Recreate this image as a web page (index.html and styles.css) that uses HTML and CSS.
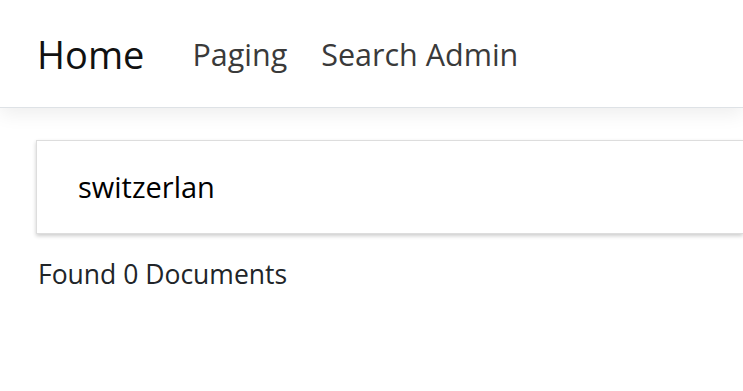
FILE: index.html
```html
<!DOCTYPE html>
<html lang="en">
<head>
    <meta charset="UTF-8">
    <meta name="viewport" content="width=device-width, initial-scale=1.0">
    <title>Home</title>
    <link rel="stylesheet" href="styles.css">
</head>
<body>
    <nav class="navbar">
        <a class="navbar-brand" href="#">Home</a>
        <a class="nav-link" href="#">Paging</a>
        <a class="nav-link" href="#">Search Admin</a>
    </nav>

    <div class="content">
        <div class="search-box">
            <input type="text" class="search-input" value="switzerlan">
        </div>
        <p class="result-count">Found 0 Documents</p>
    </div>
</body>
</html>
```

FILE: styles.css
```css
html, body {
    margin: 0;
    overflow: hidden;
}
body {
    font-family: 'Open Sans', 'Noto Sans', sans-serif;
    color: #212529;
    background-color: #fff;
}
.navbar {
    display: flex;
    align-items: center;
    height: 107px;
    padding-left: 37px;
    border-bottom: 1px solid #dee2e6;
    box-shadow: 0 6px 18px rgba(0, 0, 0, 0.07);
    background-color: #fff;
}
.navbar-brand {
    font-size: 38px;
    color: #111;
    text-decoration: none;
    margin-right: 48px;
}
.nav-link {
    font-size: 30.5px;
    color: #3a3a3a;
    text-decoration: none;
    margin-right: 34px;
}
.content {
    padding: 32px 0 0 36px;
}
.search-box {
    height: 92px;
    border: 1px solid #ddd;
    border-right: none;
    box-shadow: 0 2px 4px rgba(0, 0, 0, 0.2);
    background-color: #fff;
    display: flex;
    align-items: center;
}
.search-input {
    border: none;
    outline: none;
    width: 100%;
    padding: 0 0 2px 41px;
    font-family: inherit;
    font-size: 29px;
    color: #000;
    background: transparent;
}
.result-count {
    margin: 22px 0 0 2px;
    font-size: 26.5px;
}
```
